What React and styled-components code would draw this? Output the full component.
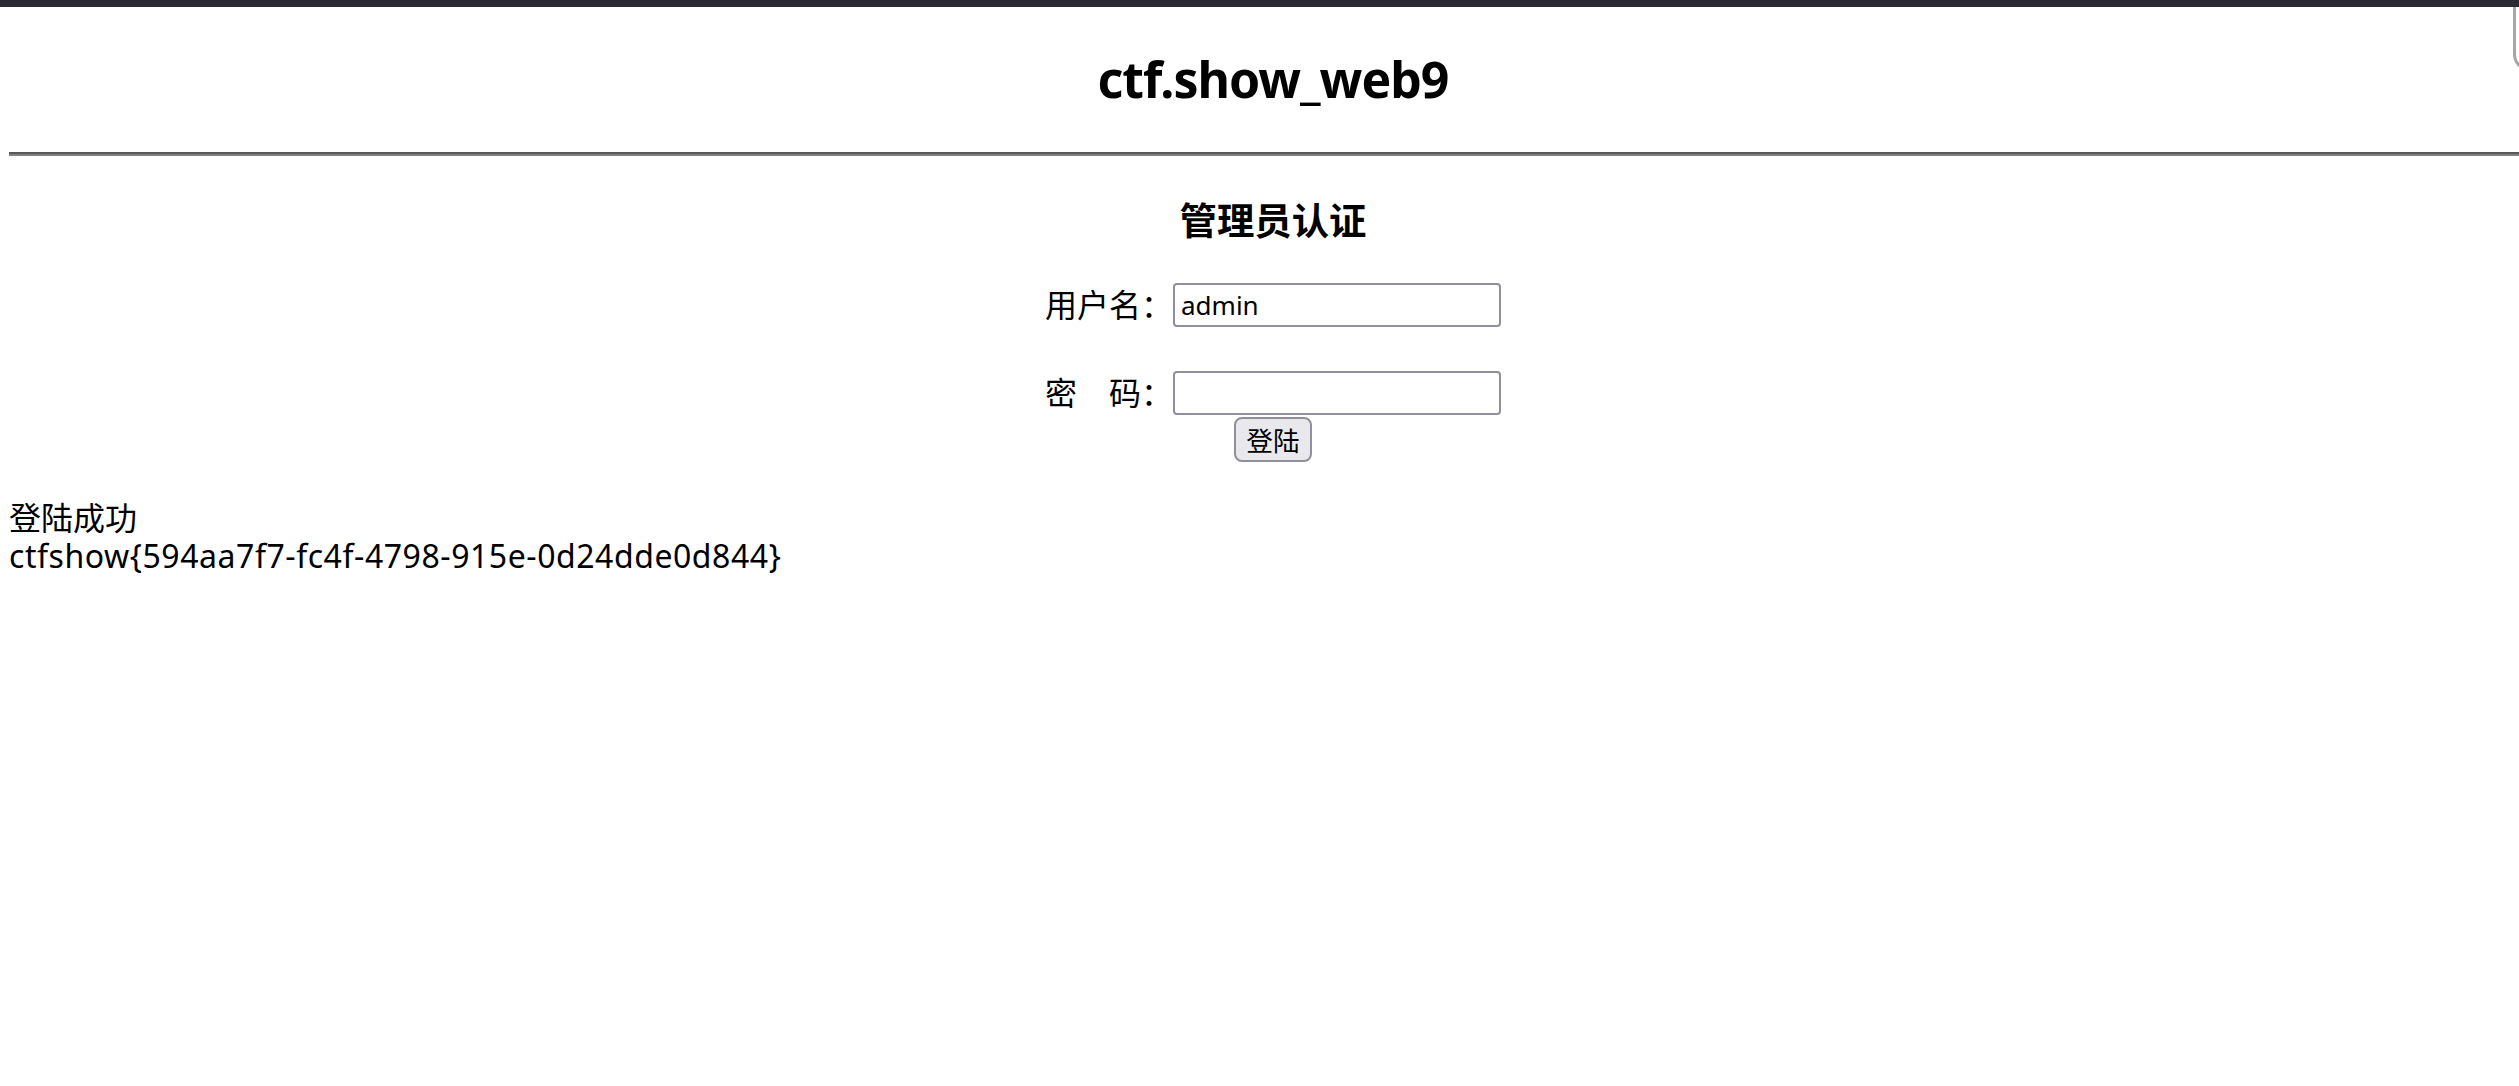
import React, { useState } from "react";
import styled, { createGlobalStyle } from "styled-components";

const FONT = `"Noto Sans", "Noto Sans CJK SC", sans-serif`;

const GlobalStyle = createGlobalStyle`
  html, body {
    margin: 0;
    padding: 0;
    background: #fff;
    overflow: hidden;
  }

  body {
    font-family: ${FONT};
    color: #000;
  }
`;

const TopBar = styled.div`
  height: 7px;
  background: #2b2a33;
`;

const EdgeTab = styled.div`
  position: absolute;
  top: 7px;
  left: 2513px;
  width: 30px;
  height: 62px;
  border-left: 3px solid #a6a6a6;
  border-bottom: 3px solid #a6a6a6;
  border-bottom-left-radius: 18px;
`;

const Page = styled.div`
  margin-left: 9px;
  width: 2528px;
`;

const Title = styled.h1`
  margin: 42px 0 0;
  font-size: 50px;
  line-height: 60px;
  font-weight: 700;
  letter-spacing: -1px;
  text-align: center;
`;

const Rule = styled.hr`
  margin: 43px 0 0;
  height: 0;
  border: 0;
  border-top: 2px solid #595959;
  border-bottom: 2px solid #808080;
`;

const Heading = styled.h3`
  margin: 42.5px 0 0;
  font-size: 37.4px;
  line-height: 44px;
  font-weight: 700;
  text-align: center;
`;

const LoginForm = styled.form`
  display: flex;
  flex-direction: column;
  align-items: center;
  margin-top: 40.5px;
`;

const Field = styled.div`
  display: flex;
  align-items: center;
  height: 44px;

  & + & {
    margin-top: 44px;
  }
`;

const Label = styled.label`
  font-size: 32px;
  line-height: 44px;
  white-space: pre;
`;

const Input = styled.input`
  box-sizing: border-box;
  width: 328px;
  height: 44px;
  margin: 0;
  padding: 0 6px;
  border: 2px solid #8f8f9d;
  border-radius: 4px;
  background: #fff;
  color: #000;
  font-family: ${FONT};
  font-size: 26px;
  outline: none;
`;

const SubmitButton = styled.button`
  box-sizing: border-box;
  margin-top: 2px;
  width: 78px;
  height: 45px;
  padding: 0;
  border: 2px solid #8f8f9d;
  border-radius: 8px;
  background: #e9e9ed;
  color: #000;
  font-family: ${FONT};
  font-size: 26.67px;
  cursor: pointer;
`;

const Result = styled.div`
  margin-top: 36.6px;
  font-size: 32px;
  line-height: 38px;
`;

const Flag = styled.span`
  letter-spacing: 0.55px;
`;

const App = () => {
  const [username, setUsername] = useState("admin");
  const [password, setPassword] = useState("");

  return (
    <>
      <GlobalStyle />
      <TopBar />
      <EdgeTab />
      <Page>
        <Title>ctf.show_web9</Title>
        <Rule />
        <Heading>管理员认证</Heading>
        <LoginForm onSubmit={(e) => e.preventDefault()}>
          <Field>
            <Label htmlFor="username">用户名：</Label>
            <Input
              id="username"
              type="text"
              value={username}
              onChange={(e) => setUsername(e.target.value)}
            />
          </Field>
          <Field>
            <Label htmlFor="password">密　码：</Label>
            <Input
              id="password"
              type="password"
              value={password}
              onChange={(e) => setPassword(e.target.value)}
            />
          </Field>
          <SubmitButton type="submit">登陆</SubmitButton>
        </LoginForm>
        <Result>
          登陆成功
          <br />
          <Flag>ctfshow{"{594aa7f7-fc4f-4798-915e-0d24dde0d844}"}</Flag>
        </Result>
      </Page>
    </>
  );
};

export default App;
